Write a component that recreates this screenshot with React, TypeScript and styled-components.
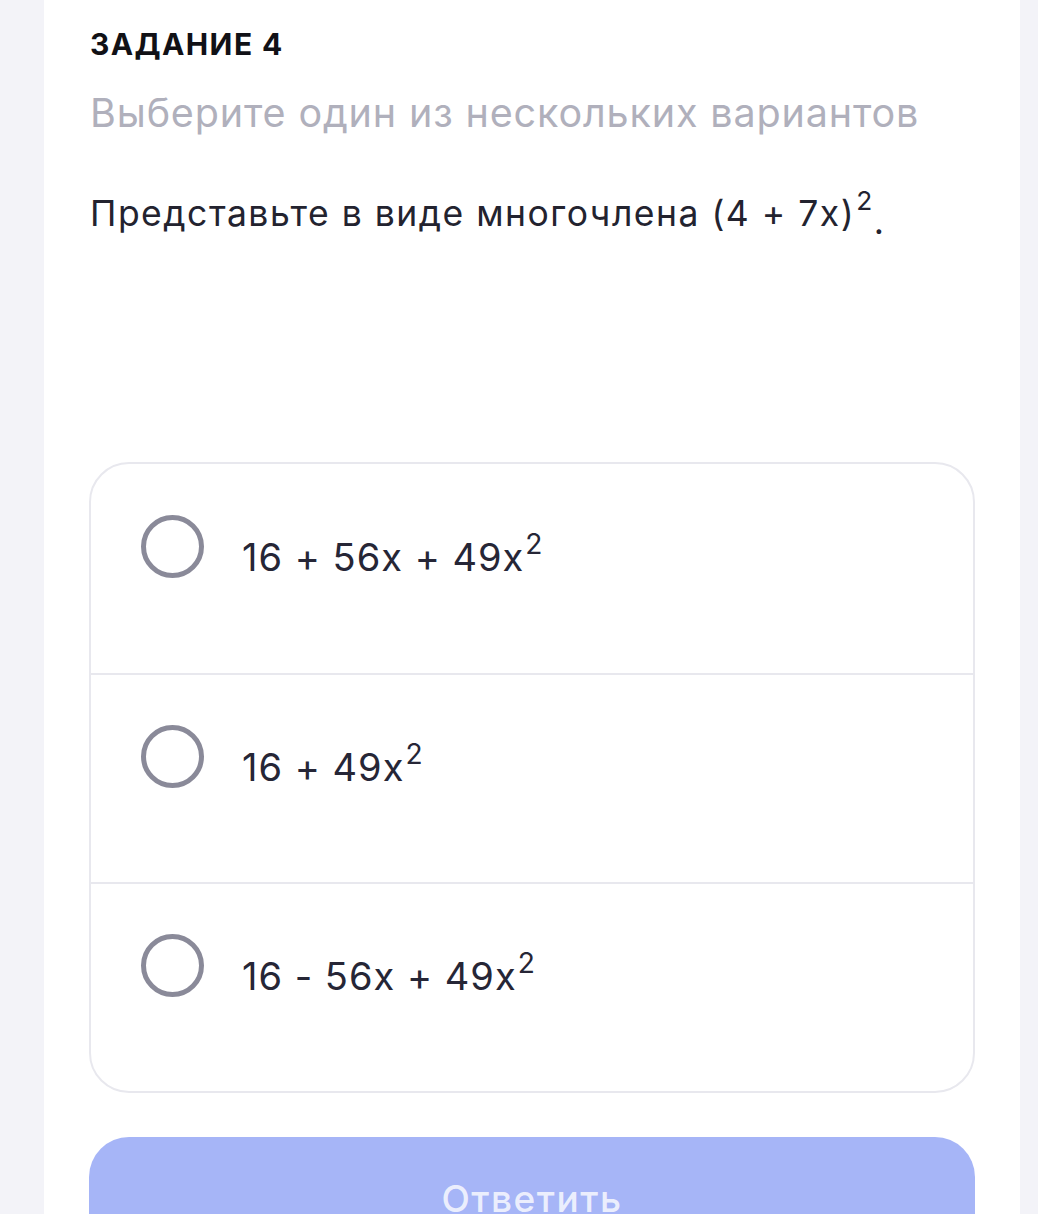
import React from "react";
import styled, { createGlobalStyle } from "styled-components";

const GlobalStyle = createGlobalStyle`
  html, body {
    margin: 0;
    padding: 0;
    background: #f3f3f8;
  }
  body {
    font-family: Inter, "Noto Sans", "Liberation Sans", sans-serif;
    color: #23232f;
  }
`;

type Option = { id: number; parts: [string, string] };

const options: Option[] = [
  { id: 1, parts: ["16 + 56x + 49x", "2"] },
  { id: 2, parts: ["16 + 49x", "2"] },
  { id: 3, parts: ["16 - 56x + 49x", "2"] },
];

export default function App() {
  return (
    <>
      <GlobalStyle />
      <Page>
        <Panel>
          <TaskTitle>ЗАДАНИЕ 4</TaskTitle>
          <Hint>Выберите один из нескольких вариантов</Hint>
          <Question>
            Представьте в виде многочлена (4 + 7x)<Sup>2</Sup>
            <Dot>.</Dot>
          </Question>
          <OptionsCard>
            {options.map((o) => (
              <OptionRow key={o.id}>
                <Radio />
                <OptionText>
                  {o.parts[0]}
                  <Sup>{o.parts[1]}</Sup>
                </OptionText>
              </OptionRow>
            ))}
          </OptionsCard>
          <SubmitButton disabled>Ответить</SubmitButton>
        </Panel>
      </Page>
    </>
  );
}

const Page = styled.div`
  display: flex;
  justify-content: flex-start;
  padding-left: 44px;
  height: 1214px;
  overflow: hidden;
`;

const Panel = styled.main`
  width: 976px;
  box-sizing: border-box;
  background: #ffffff;
  padding: 24px 45px 40px 45px;
  display: flex;
  flex-direction: column;

  & > * {
    flex-shrink: 0;
  }
`;

const TaskTitle = styled.h1`
  margin: 0 0 0 1px;
  font-size: 30px;
  line-height: 40px;
  font-weight: 700;
  color: #111116;
  letter-spacing: 1.4px;
`;

const Hint = styled.p`
  margin: 26px 0 0 1px;
  font-size: 39.5px;
  line-height: 46px;
  font-weight: 400;
  color: #b0b0bc;
  letter-spacing: 0.85px;
`;

const Question = styled.p`
  margin: 56px 0 0 1px;
  font-size: 35.5px;
  line-height: 44px;
  font-weight: 400;
  color: #23232f;
  letter-spacing: 1.5px;
`;

const Sup = styled.sup`
  font-size: 0.74em;
  vertical-align: 0.6em;
  line-height: 0;
  margin-left: 1px;
`;

const Dot = styled.span`
  position: relative;
  top: 8px;
`;

const OptionsCard = styled.section`
  margin-top: 226px;
  border: 2px solid #e8e8ee;
  border-radius: 40px;
  display: flex;
  flex-direction: column;
  overflow: hidden;
`;

const OptionRow = styled.label`
  display: flex;
  flex-shrink: 0;
  align-items: center;
  gap: 38px;
  height: 209px;
  box-sizing: border-box;
  padding: 50px 0 95px 50px;
  & + & {
    border-top: 2px solid #e8e8ee;
  }
`;

const Radio = styled.span`
  flex: none;
  width: 63px;
  height: 63px;
  box-sizing: border-box;
  border: 5px solid #8a8a99;
  border-radius: 50%;
`;

const OptionText = styled.span`
  padding-top: 22px;
  font-size: 38px;
  line-height: 44px;
  color: #262636;
  letter-spacing: 1px;
`;

const SubmitButton = styled.button`
  margin-top: 44px;
  height: 120px;
  border: none;
  border-radius: 40px;
  background: #a6b5f7;
  color: rgba(255, 255, 255, 0.8);
  font-family: inherit;
  font-size: 37px;
  font-weight: 500;
  letter-spacing: 1.5px;
  padding-top: 4px;
`;
